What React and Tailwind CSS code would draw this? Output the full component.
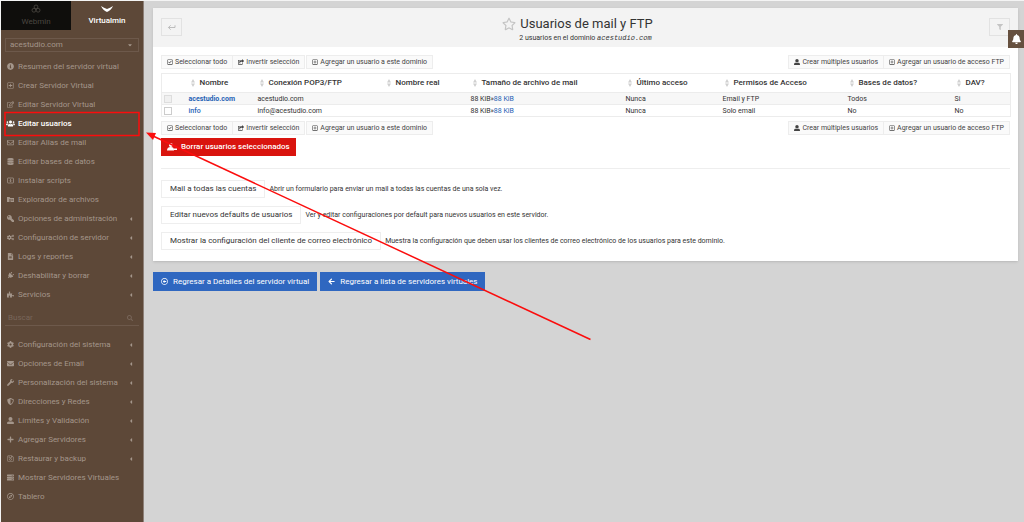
import {
  FaInfoCircle, FaRegPlusSquare, FaRegEdit, FaUsers, FaRegEnvelope, FaDatabase,
  FaKey, FaCogs, FaFileAlt, FaPlug, FaPuzzlePiece, FaSearch, FaCog, FaEnvelope, FaWrench,
  FaShieldAlt, FaUserAlt, FaPlus, FaRegSave, FaServer, FaRegCompass, FaCaretLeft, FaCaretDown, FaRegStar,
  FaFilter, FaBell, FaRegCheckSquare, FaShareSquare, FaArrowLeft, FaRegArrowAltCircleLeft,
} from 'react-icons/fa';

const domainMenu = [
  { icon: FaInfoCircle, label: 'Resumen del servidor virtual' },
  { icon: FaRegPlusSquare, label: 'Crear Servidor Virtual' },
  { icon: FaRegEdit, label: 'Editar Servidor Virtual' },
  { icon: FaUsers, label: 'Editar usuarios', active: true },
  { icon: FaRegEnvelope, label: 'Editar Alias de mail' },
  { icon: FaDatabase, label: 'Editar bases de datos' },
  { icon: InstallIcon, label: 'Instalar scripts' },
  { icon: ExplorerIcon, label: 'Explorador de archivos' },
  { icon: FaKey, label: 'Opciones de administración', sub: true, turn: '-scale-x-100' },
  { icon: FaCogs, label: 'Configuración de servidor', sub: true },
  { icon: FaFileAlt, label: 'Logs y reportes', sub: true },
  { icon: FaPlug, label: 'Deshabilitar y borrar', sub: true, turn: 'rotate-45' },
  { icon: FaPuzzlePiece, label: 'Servicios', sub: true },
];

const systemMenu = [
  { icon: FaCog, label: 'Configuración del sistema', sub: true },
  { icon: FaEnvelope, label: 'Opciones de Email', sub: true },
  { icon: FaWrench, label: 'Personalización del sistema', sub: true },
  { icon: FaShieldAlt, label: 'Direcciones y Redes', sub: true },
  { icon: FaUserAlt, label: 'Límites y Validación', sub: true },
  { icon: FaPlus, label: 'Agregar Servidores', sub: true },
  { icon: FaRegSave, label: 'Restaurar y backup', sub: true },
  { icon: FaServer, label: 'Mostrar Servidores Virtuales' },
  { icon: FaRegCompass, label: 'Tablero' },
];

const columns = [
  'Nombre',
  'Conexión POP3/FTP',
  'Nombre real',
  'Tamaño de archivo de mail',
  'Último acceso',
  'Permisos de Acceso',
  'Bases de datos?',
  'DAV?',
];

const users = [
  { name: 'acestudio.com', login: 'acestudio.com', access: 'Email y FTP', db: 'Todos', dav: 'Si', owner: true },
  { name: 'info', login: 'info@acestudio.com', access: 'Solo email', db: 'No', dav: 'No' },
];

const actions = [
  { label: 'Mail a todas las cuentas', text: 'Abrir un formulario para enviar un mail a todas las cuentas de una sola vez.' },
  { label: 'Editar nuevos defaults de usuarios', text: 'Ver y editar configuraciones por default para nuevos usuarios en este servidor.' },
  {
    label: 'Mostrar la configuración del cliente de correo electrónico',
    text: 'Muestra la configuración que deben usar los clientes de correo electrónico de los usuarios para este dominio.',
  },
];

export default function App() {
  return (
    <div className="flex min-h-screen bg-[#d4d4d4] border-t border-l border-[#f4f4f4] font-['Roboto',sans-serif] text-[7px] text-[#333]">
      <Sidebar />
      <main className="flex-1 min-w-0 pl-[9px] pr-[6px] pt-[7px]">
        <section className="bg-white shadow-sm">
          <PageHeader />
          <div className="px-2 pt-2 pb-[11px]">
            <Toolbar />
            <UsersTable />
            <Toolbar />
            <button className="flex items-center gap-1 mt-[3px] h-[18px] px-[6px] bg-[#d9140e] text-white text-[8px] font-medium">
              <UserRemoveIcon />
              Borrar usuarios seleccionados
            </button>
            <hr className="mt-3 mb-[11px] border-[#eee]" />
            <div className="flex flex-col gap-2">
              {actions.map((action) => (
                <div key={action.label} className="flex items-center gap-1">
                  <button className="h-[18px] px-2 border border-[#eee] text-[8px] whitespace-nowrap">{action.label}</button>
                  <span>{action.text}</span>
                </div>
              ))}
            </div>
          </div>
        </section>
        <div className="flex gap-[3px] mt-[11px]">
          <FooterButton icon={FaRegArrowAltCircleLeft}>Regresar a Detalles del servidor virtual</FooterButton>
          <FooterButton icon={FaArrowLeft}>Regresar a lista de servidores virtuales</FooterButton>
        </div>
      </main>
      <button aria-label="Notificaciones" className="absolute right-0 top-[30px] flex items-center justify-center w-4 h-[18px] bg-[#66503f] text-white">
        <FaBell className="w-[9px] h-[10px]" />
      </button>
      <Annotation />
    </div>
  );
}

function Sidebar() {
  return (
    <aside className="w-[143px] shrink-0 bg-[#5d4838] text-[#a4968b] text-[8px] border-r border-[#8d8078]">
      <div className="flex h-[29px]">
        <button className="flex flex-col items-center justify-center gap-[2px] w-[70px] bg-[#0f0e0c] text-[#4b4741]">
          <WebminLogo />
          <span>Webmin</span>
        </button>
        <button className="flex flex-col items-center justify-center gap-[2px] flex-1 text-white font-medium">
          <svg viewBox="0 0 12 8" className="w-3 h-2" fill="currentColor">
            <path d="M0 1 Q3 3 6 4 Q9 3 12 1 Q10 5.500 6 7 Q2 5.500 0 1Z" />
          </svg>
          <span>Virtualmin</span>
        </button>
      </div>
      <div className="relative mx-1 mt-2">
        <select aria-label="Dominio" className="appearance-none block w-full h-[14px] px-1 border border-[#6d594b] bg-transparent">
          <option>acestudio.com</option>
        </select>
        <FaCaretDown className="absolute right-[6px] top-1 w-[6px] h-[6px] pointer-events-none" />
      </div>
      <Menu items={domainMenu} className="mt-[5px]" />
      <div className="flex items-center mx-1 mt-[6px] h-[16px] border-b border-[#6d594b]">
        <input aria-label="Buscar" placeholder="Buscar" className="flex-1 min-w-0 px-[3px] outline-none placeholder:text-[#78665a]" />
        <FaSearch className="w-[6px] h-[6px] mr-[6px] text-[#78665a]" />
      </div>
      <Menu items={systemMenu} className="mt-[9px]" />
    </aside>
  );
}

function Menu({ items, className }) {
  return (
    <nav className={className}>
      {items.map(({ icon: Icon, label, active, sub, turn = '' }) => (
        <a
          key={label}
          href="#"
          className={`flex items-center h-[19px] pl-[5px] pr-[10px] gap-1 whitespace-nowrap ${active ? 'text-white font-medium' : ''}`}
        >
          <span className="flex justify-center w-2">
            <Icon className={`shrink-0 h-[7px] ${active ? 'w-[9px]' : 'w-[7px]'} ${turn}`} />
          </span>
          <span className="flex-1">{label}</span>
          {sub && <FaCaretLeft className="w-1 h-[6px]" />}
        </a>
      ))}
    </nav>
  );
}

function WebminLogo() {
  return (
    <svg viewBox="0 0 12 12" className="w-[10px] h-[10px]" fill="none" stroke="currentColor">
      <circle cx="6" cy="3.500" r="2.300" />
      <circle cx="3.500" cy="7.500" r="2.300" />
      <circle cx="8.500" cy="7.500" r="2.300" />
    </svg>
  );
}

function InstallIcon({ className }) {
  return (
    <svg viewBox="0 0 14 14" className={className} fill="none" stroke="currentColor" strokeWidth="1.500">
      <rect x="1" y="2" width="12" height="10" rx="1" />
      <path d="M7 4V9M4.500 7L7 9.500L9.500 7" />
    </svg>
  );
}

function ExplorerIcon({ className }) {
  return (
    <svg viewBox="0 0 14 14" className={className} fill="currentColor">
      <path d="M0 2H5L6.500 4H14V12H7V6H5V12H0Z" />
      <path d="M8.500 6H12.500V7H8.500ZM8.500 8H12.500V9H8.500Z" fill="#5d4838" />
    </svg>
  );
}

function UserRemoveIcon() {
  return (
    <svg viewBox="0 0 10 8" className="w-[10px] h-2" fill="currentColor">
      <circle cx="3.800" cy="2" r="1.900" />
      <path d="M0 7.500C0 5 1.500 4 3.800 4S7 5 7 7.500Z" />
      <path d="M6.500 5.500H10V7H6.500Z" />
    </svg>
  );
}

function ReturnIcon() {
  return (
    <svg viewBox="0 0 10 8" className="w-[9px] h-[7px]" fill="none" stroke="currentColor">
      <path d="M9 1.500V4H1.500M4 1.500L1.500 4L4 6.500" />
    </svg>
  );
}

function PageHeader() {
  return (
    <header className="flex items-start justify-between h-[39px] px-2 bg-[#f3f3f3]">
      <button aria-label="Volver" className="flex items-center justify-center w-[21px] h-[18px] mt-[10px] border border-[#e2e2e2] text-[#b5b5b5]">
        <ReturnIcon />
      </button>
      <div className="text-center mt-[7px]">
        <h1 className="flex items-center justify-center gap-1 pr-4 text-[13px] leading-[18px]">
          <FaRegStar className="w-[14px] h-[14px] text-[#c4c4c4]" />
          Usuarios de mail y FTP
        </h1>
        <p className="leading-[10px]">
          2 usuarios en el dominio <em className="font-['Liberation_Mono',monospace]">acestudio.com</em>
        </p>
      </div>
      <button aria-label="Filtrar" className="flex items-center justify-center w-[21px] h-[18px] mt-[10px] border border-[#e2e2e2] text-[#c4c4c4]">
        <FaFilter className="w-[6px] h-[6px]" />
      </button>
    </header>
  );
}

function Toolbar() {
  return (
    <div className="flex justify-between">
      <div className="flex">
        <ToolButton icon={FaRegCheckSquare}>Seleccionar todo</ToolButton>
        <ToolButton icon={FaShareSquare}>Invertir selección</ToolButton>
        <div className="w-[2px]" />
        <ToolButton icon={FaRegPlusSquare}>Agregar un usuario a este dominio</ToolButton>
      </div>
      <div className="flex">
        <ToolButton icon={FaUserAlt}>Crear múltiples usuarios</ToolButton>
        <ToolButton icon={FaRegPlusSquare}>Agregar un usuario de acceso FTP</ToolButton>
      </div>
    </div>
  );
}

function ToolButton({ icon: Icon, children }) {
  return (
    <button className="flex items-center gap-[2px] h-[14px] px-[5px] -ml-px first:ml-0 bg-[#fafafa] border border-[#ededed] text-[#444] whitespace-nowrap">
      <Icon className="w-[6px] h-[6px]" />
      {children}
    </button>
  );
}

function UsersTable() {
  return (
    <table className="w-full table-fixed my-1 border border-[#ececec] text-left">
      <colgroup>
        <col className="w-[27px]" />
        <col className="w-[69px]" />
        <col className="w-[127px]" />
        <col className="w-[86px]" />
        <col className="w-[155px]" />
        <col className="w-[97px]" />
        <col className="w-[125px]" />
        <col className="w-[107px]" />
        <col className="w-[56px]" />
      </colgroup>
      <thead>
        <tr className="h-[19px] text-[8px]">
          <th aria-label="Seleccionar" />
          {columns.map((col) => (
            <th key={col} className="font-medium whitespace-nowrap">
              <span className="flex items-center gap-[5px] pl-[2px]">
                <svg viewBox="0 0 4 8" className="w-1 h-2" fill="#d0d0d0">
                  <path d="M2 0L4 3.500H0ZM2 8L0 4.500H4Z" />
                </svg>
                {col}
              </span>
            </th>
          ))}
        </tr>
      </thead>
      <tbody>
        {users.map((user) => (
          <tr key={user.name} className={`h-3 leading-[10px] border-t border-[#ececec] ${user.owner ? 'bg-[#f7f7f7]' : ''}`}>
            <td>
              <input
                type="checkbox"
                aria-label={user.name}
                disabled={user.owner}
                className="appearance-none block w-2 h-2 ml-[2px] bg-white border border-[#ccc] disabled:bg-[#f0f0f0] disabled:border-[#ddd]"
              />
            </td>
            <td>
              <a href="#" className={`text-[#1f62b5] ${user.owner ? 'font-bold' : 'font-medium'}`}>{user.name}</a>
            </td>
            <td>{user.login}</td>
            <td />
            <td>
              88 KiB»<a href="#" className="text-[#1f62b5]">88 KiB</a>
            </td>
            <td>Nunca</td>
            <td>{user.access}</td>
            <td>{user.db}</td>
            <td>{user.dav}</td>
          </tr>
        ))}
      </tbody>
    </table>
  );
}

function FooterButton({ icon: Icon, children }) {
  return (
    <button className="flex items-center gap-[5px] h-[19px] px-2 bg-[#2f67c0] text-white text-[8px] whitespace-nowrap">
      <Icon className="w-[7px] h-[7px]" />
      {children}
    </button>
  );
}

// red frame round the menu entry and the arrow that points to it
function Annotation() {
  return (
    <svg className="absolute left-0 top-0 w-[600px] h-[350px] pointer-events-none" viewBox="0 0 600 350" fill="none" stroke="#fb0d0d">
      <rect x="5" y="112.500" width="134" height="23" strokeWidth="1.500" />
      <path d="M590.500 339.500L153 136" strokeWidth="1.500" />
      <path d="M146 132.500L156 133L153 140Z" fill="#fb0d0d" stroke="none" />
    </svg>
  );
}
